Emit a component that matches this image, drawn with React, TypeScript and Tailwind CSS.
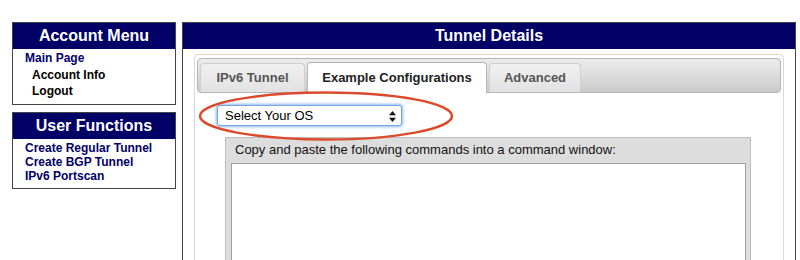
import React from "react";

export default function App() {
  return (
    <div
      className="relative w-[800px] h-[260px] overflow-hidden bg-white flex items-start pt-[22px] pl-[12px] gap-[6px]"
      style={{ fontFamily: '"Liberation Sans", Arial, sans-serif' }}
    >
      {/* Left column */}
      <div className="w-[164px] flex flex-col gap-[7px]">
        <div className="border border-[#444]">
          <div className="h-[26px] bg-[#000066] text-white font-bold text-[16px] flex items-center justify-center">
            Account Menu
          </div>
          <div className="pl-[12px] pt-[1px] pb-[4px] text-[12px] font-bold leading-[16.5px]">
            <div className="text-[#000066]">Main Page</div>
            <div className="pl-[7px] text-black">Account Info</div>
            <div className="pl-[7px] text-black">Logout</div>
          </div>
        </div>
        <div className="border border-[#444]">
          <div className="h-[26px] bg-[#000066] text-white font-bold text-[16px] flex items-center justify-center">
            User Functions
          </div>
          <div className="pl-[12px] pt-[2px] pb-[5px] text-[12px] font-bold leading-[14px] text-[#000066]">
            <div>Create Regular Tunnel</div>
            <div>Create BGP Tunnel</div>
            <div>IPv6 Portscan</div>
          </div>
        </div>
      </div>

      {/* Right box */}
      <div className="w-[614px] h-[260px] border border-[#444] border-b-0">
        <div className="h-[26px] bg-[#000066] text-white font-bold text-[16px] flex items-center justify-center">
          Tunnel Details
        </div>
        <div className="pl-[11px] pt-[5px]">
          <div className="w-[590px] h-[240px] border border-[#d8d8d8] rounded-[4px] p-[2px] pt-[3px]">
            {/* Tab bar */}
            <div className="h-[35px] rounded-[4px] border border-[#b5b5b5] bg-gradient-to-b from-[#ececec] to-[#cbcbcb] flex items-end gap-[2px] pl-[2px]">
              <div className="w-[105px] h-[30px] -mb-[1px] rounded-t-[4px] border border-[#cfcfcf] border-b-[#b5b5b5] bg-gradient-to-b from-[#f0f0f0] to-[#e2e2e2] flex items-center justify-center text-[13px] font-bold text-[#555]">
                IPv6 Tunnel
              </div>
              <div className="w-[180px] h-[31px] -mb-[1px] rounded-t-[4px] border border-[#b5b5b5] border-b-0 bg-white flex items-center justify-center text-[13px] font-bold text-[#222]">
                Example Configurations
              </div>
              <div className="w-[92px] h-[30px] -mb-[1px] rounded-t-[4px] border border-[#cfcfcf] border-b-[#b5b5b5] bg-gradient-to-b from-[#f0f0f0] to-[#e2e2e2] flex items-center justify-center text-[13px] font-bold text-[#555]">
                Advanced
              </div>
            </div>

            {/* Select */}
            <div className="pl-[20px] pt-[12px]">
              <div className="relative w-[185px] h-[21px] rounded-[3px] border border-[#78a6e4] bg-white shadow-[0_0_3px_1px_#8ab8f0] flex items-center pl-[7px] text-[13px] text-black">
                Select Your OS
                <svg className="absolute right-[5px] top-[5px]" width="7" height="11" viewBox="0 0 7 11">
                  <path d="M3.5 0 L7 4.2 L0 4.2 Z" fill="#111" />
                  <path d="M3.5 11 L7 6.8 L0 6.8 Z" fill="#111" />
                </svg>
              </div>
            </div>

            {/* Command box */}
            <div className="pl-[28px] pt-[11px]">
              <div className="w-[526px] h-[130px] bg-[#dddddd] border border-[#bdbdbd] px-[5px]">
                <div className="pl-[4px] pt-[4px] h-[25px] text-[13px] text-[#111] leading-[16px]">
                  Copy and paste the following commands into a command window:
                </div>
                <div className="w-[515px] h-[100px] bg-white border border-[#a0a0a0]" />
              </div>
            </div>
          </div>
        </div>
      </div>

      {/* Red highlight ellipse overlay */}
      <svg className="absolute left-0 top-0 pointer-events-none" width="800" height="260">
        <ellipse cx="326" cy="116" rx="126" ry="23.5" fill="none" stroke="#dc4a2c" strokeWidth="2.5" />
      </svg>
    </div>
  );
}
